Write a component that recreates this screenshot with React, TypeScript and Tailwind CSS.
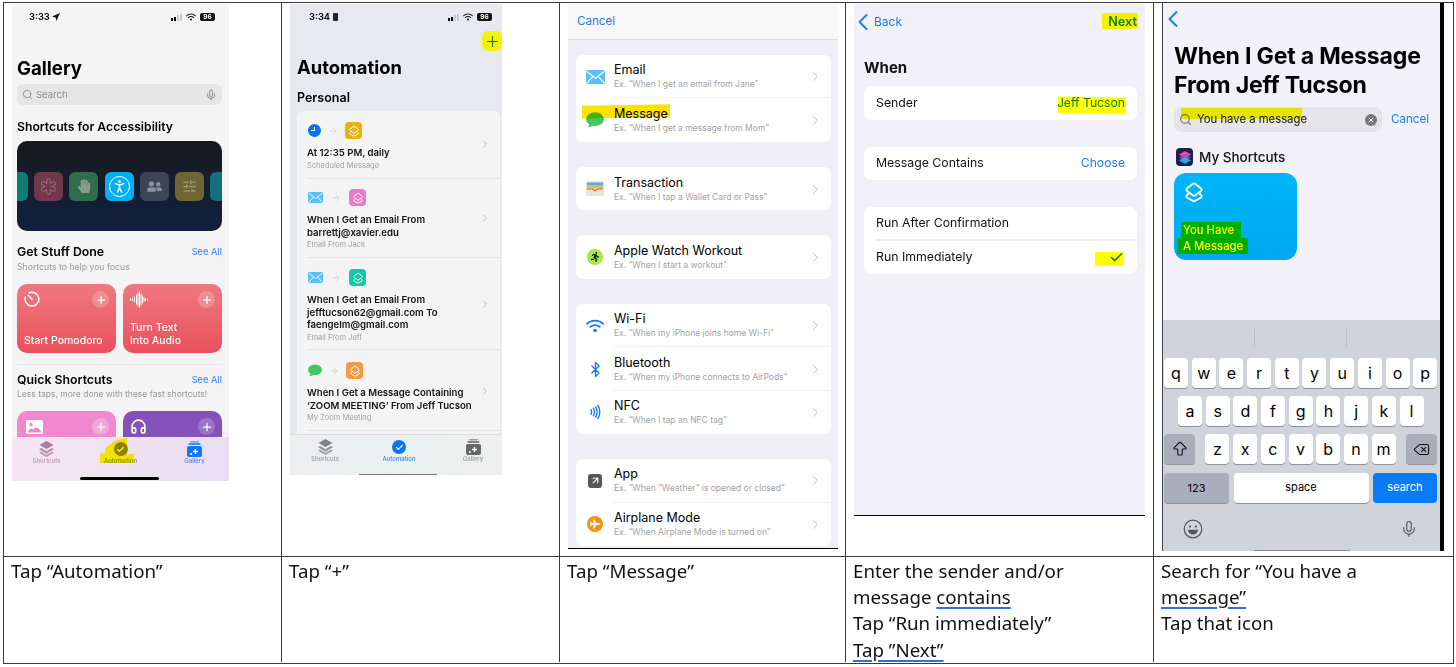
import {
  ArrowRight,
  ArrowUpRight,
  Bluetooth,
  Check,
  ChevronLeft,
  ChevronRight,
  Delete,
  Headphones,
  Mic,
  Nfc,
  Plus,
  PersonStanding,
  Search,
  SlidersHorizontal,
  ArrowBigUp,
  X,
} from "lucide-react";
import { FaHandPaper, FaRunning, FaUserFriends, FaPlane } from "react-icons/fa";
import { FaWifi } from "react-icons/fa6";
import type { ReactNode } from "react";

const Logo = ({ size = 12, color = "white", w = 2 }: { size?: number; color?: string; w?: number }) => (
  <svg width={size} height={size} viewBox="0 0 24 24" fill="none" stroke={color} strokeWidth={w} strokeLinejoin="round" strokeLinecap="round">
    <path d="M10.5 3.2a2.5 2.5 0 0 1 3 0l6 4.6a2 2 0 0 1 0 3.2l-6 4.6a2.5 2.5 0 0 1-3 0l-6-4.6a2 2 0 0 1 0-3.2z" />
    <path d="M6.5 13.5l-2 1.6a2 2 0 0 0 0 3.2l6 3.2a2.5 2.5 0 0 0 3 0l6-3.2a2 2 0 0 0 0-3.2l-2-1.6" />
  </svg>
);

const MailIcon = ({ w, h }: { w: number; h: number }) => (
  <svg width={w} height={h} viewBox="0 0 30 22">
    <rect width="30" height="22" rx="2" fill="#5ac0f7" />
    <path d="M1 2l14 11L29 2M1 21l10-11M29 21L19 10" stroke="white" strokeWidth="1.8" fill="none" />
  </svg>
);

const Bubble = ({ w, h }: { w: number; h: number }) => (
  <svg width={w} height={h} viewBox="0 0 30 26">
    <ellipse cx="15" cy="11.5" rx="15" ry="11.5" fill="#46c65e" />
    <path d="M6 18c0 3-1 5-3 7 4 0 7-1 9-4z" fill="#46c65e" />
  </svg>
);

const WalletIcon = () => (
  <svg width="18" height="15" viewBox="0 0 18 15">
    <rect width="18" height="15" rx="2" fill="#e8e4da" />
    <rect x="1" y="1.5" width="16" height="2.5" fill="#6ba4dc" />
    <rect x="1" y="4" width="16" height="2" fill="#a7cf6c" />
    <rect x="1" y="6" width="16" height="2" fill="#f2c354" />
    <path d="M1 8h5.5l2.5 2 2.500-2H17" stroke="#e2655c" strokeWidth="1.200" fill="none" />
  </svg>
);

const StatusBar = ({ time, extra, pl, pr }: { time: string; extra: ReactNode; pl: string; pr: string }) => (
  <div className={`h-[26px] flex items-center justify-between shrink-0 ${pl} ${pr}`}>
    <div className="flex items-center gap-[2px] text-[9.3px] font-semibold text-black">
      <span>{time}</span>
      {extra}
    </div>
    <div className="flex items-center gap-[4px]">
      <div className="flex items-end gap-[1px] h-[7px]">
        <span className="w-[2px] h-[2.500px] bg-black" />
        <span className="w-[2px] h-[4px] bg-black" />
        <span className="w-[2px] h-[5.500px] bg-[#c9c9c9]" />
        <span className="w-[2px] h-[7px] bg-[#c9c9c9]" />
      </div>
      <FaWifi size={10} color="#111" />
      <span className="w-[15px] h-[8px] rounded-[2px] bg-[#111] text-white text-[6.500px] font-bold leading-[8px] text-center">96</span>
    </div>
  </div>
);

const BannerTile = ({ bg, extra = "", children }: { bg: string; extra?: string; children?: ReactNode }) => (
  <div className={`h-[29px] w-[29px] shrink-0 rounded-[6px] flex items-center justify-center overflow-hidden ${bg} ${extra}`}>{children}</div>
);

const StarOutline = () => (
  <svg width="17" height="17" viewBox="0 0 17 17" strokeLinecap="round">
    <path d="M8.5 2.500v12M3.300 5.500l10.400 6M13.700 5.500l-10.400 6" stroke="#a5707c" strokeWidth="4.500" />
    <path d="M8.5 2.500v12M3.300 5.500l10.400 6M13.700 5.500l-10.400 6" stroke="#70384a" strokeWidth="2.700" />
  </svg>
);

const TimerIcon = () => (
  <svg width="16" height="16" viewBox="0 0 16 16" fill="none" stroke="white" strokeWidth="1.500" strokeLinecap="round">
    <path d="M5 1.900A6.900 6.900 0 1 1 1.400 6" />
    <path d="M4.200 4.200L8 8.200" />
  </svg>
);

const WaveIcon = () => (
  <svg width="18" height="17" viewBox="0 0 18 17" stroke="white" strokeWidth="1" strokeLinecap="round">
    <path d="M.5 7.500v2M2.500 7v3M4.500 6v5M6.500 4v9M8 2v13M9.500 0.500v16M11 3v11M12.500 5v7M14 6.500v4M15.500 7.500v2M17.300 8v1" />
  </svg>
);

const PictureIcon = () => (
  <svg width="17" height="14" viewBox="0 0 17 14">
    <rect width="17" height="14" rx="2" fill="white" />
    <circle cx="5" cy="4.500" r="1.700" fill="#ef88cd" />
    <path d="M1.500 12.500c2-4 4-5 6-3 2-3 5-3 8 3z" fill="#ef88cd" />
  </svg>
);

const SmileIcon = () => (
  <svg width="20" height="20" viewBox="0 0 20 20" fill="none" stroke="#55565a" strokeWidth="1.200">
    <circle cx="10" cy="10" r="8.800" />
    <circle cx="7" cy="7.500" r="1.100" fill="#55565a" stroke="none" />
    <circle cx="13" cy="7.500" r="1.100" fill="#55565a" stroke="none" />
    <path d="M4.800 10.800h10.400c-.4 3-2.600 4.800-5.200 4.800s-4.800-1.800-5.200-4.800z" fill="#55565a" stroke="none" />
  </svg>
);

const PlusDot = ({ bg }: { bg: string }) => (
  <div className={`w-[17px] h-[17px] rounded-full flex items-center justify-center ${bg}`}>
    <Plus size={12} color="white" strokeWidth={2.500} />
  </div>
);

const RedCard = ({ icon, lines }: { icon: ReactNode; lines: string[] }) => (
  <div className="w-[99px] h-[69px] rounded-[10px] bg-gradient-to-b from-[#ef7880] to-[#e8505c] flex flex-col justify-between pl-[7px] pr-[7px] pt-[7px] pb-[6px]">
    <div className="flex items-start justify-between">
      {icon}
      <PlusDot bg="bg-white/20" />
    </div>
    <div className="text-white text-[10.500px] leading-[12.500px] font-medium">
      {lines.map((l) => (
        <div key={l}>{l}</div>
      ))}
    </div>
  </div>
);

const TabIcon = ({ kind, color }: { kind: string; color: string }) => {
  if (kind === "stack")
    return (
      <svg width="15" height="16" viewBox="0 0 15 16">
        <path d="M7.500 0l7 4-7 4-7-4z" fill={color} />
        <path d="M2 7l5.500 3.200L13 7l2 1.200-7.500 4.300L0 8.200z" fill={color} opacity=".85" />
        <path d="M2 10.500l5.500 3.200L13 10.500l2 1.200L7.500 16 0 11.700z" fill={color} opacity=".7" />
      </svg>
    );
  if (kind === "check")
    return (
      <div className="w-[14px] h-[14px] rounded-full flex items-center justify-center" style={{ background: color }}>
        <Check size={9} color="white" strokeWidth={3} />
      </div>
    );
  return (
    <svg width="15" height="16" viewBox="0 0 15 16">
      <rect x="3" y="0" width="9" height="1.500" rx=".7" fill={color} opacity=".6" />
      <rect x="1.500" y="2" width="12" height="2" rx=".7" fill={color} opacity=".8" />
      <rect x="0" y="5" width="15" height="11" rx="2" fill={color} />
      <path d="M8.500 8v5M6 10.500h5" stroke="white" strokeWidth="1.300" />
      <circle cx="4" cy="13" r="1" fill="white" />
    </svg>
  );
};

const TabBar = ({
  bg,
  h,
  offset,
  tabs,
  bar,
}: {
  bg: string;
  h: string;
  offset: string;
  tabs: { label: string; kind: string; color: string; text: string }[];
  bar: ReactNode;
}) => (
  <div className={`shrink-0 flex flex-col items-center relative overflow-hidden ${h} ${bg}`}>
    <div className={`flex w-full pt-[4px] ${offset}`}>
      {tabs.map((t) => (
        <div key={t.label} className="w-[74px] shrink-0 flex flex-col items-center">
          <div className="h-[16px] flex items-center">
            <TabIcon kind={t.kind} color={t.color} />
          </div>
          <div className={`text-[6px] leading-[10px] font-medium mt-[-1px] ${t.text}`}>{t.label}</div>
        </div>
      ))}
    </div>
    {bar}
  </div>
);

const Phone1 = () => (
  <div className="relative w-[217px] h-[477px] bg-[#f4f4f5] flex flex-col overflow-hidden">
    <StatusBar time="3:33" pl="pl-[17px]" pr="pr-[14px]" extra={<svg width="8" height="8" viewBox="0 0 10 10"><path d="M10 0L0 4.500l4.500 1L5.500 10z" fill="#111" /></svg>} />
    <div className="pl-[5px] pr-[7px] flex flex-col flex-1 min-h-0">
      <div className="mt-[26px] h-[24px] text-[18.600px] leading-[24px] font-bold text-black">Gallery</div>
      <div className="mt-[4px] h-[21px] rounded-[6px] bg-[#e6e6e7] flex items-center pl-[5px] pr-[5px] text-[#8c8c8e]">
        <Search size={11} />
        <span className="ml-[3px] text-[9.500px] pt-[1px]">Search</span>
        <Mic size={12} className="ml-auto" />
      </div>
      <div className="mt-[14px] h-[16px] text-[12.200px] leading-[16px] font-semibold text-black">Shortcuts for Accessibility</div>
      <div className="mt-[6px] h-[90px] rounded-[10px] bg-gradient-to-b from-[#18191e] to-[#10203f] flex items-center gap-[6.200px] overflow-hidden">
        <BannerTile bg="bg-[#0b7f73]" extra="-ml-[18px]" />
        <BannerTile bg="bg-[#70384a]"><StarOutline /></BannerTile>
        <BannerTile bg="bg-[#2f6d4c]"><FaHandPaper size={14} color="#8a9a90" /></BannerTile>
        <BannerTile bg="bg-[#05aff2]">
          <div className="w-[21px] h-[21px] rounded-full border-[1.500px] border-white flex items-center justify-center">
            <PersonStanding size={17} color="white" strokeWidth={2} />
          </div>
        </BannerTile>
        <BannerTile bg="bg-[#3c4557]"><FaUserFriends size={15} color="#8a91a0" /></BannerTile>
        <BannerTile bg="bg-[#6f6433]"><SlidersHorizontal size={15} color="#a49b6e" /></BannerTile>
        <BannerTile bg="bg-[#116f80]" />
      </div>
      <div className="mt-[13px] h-[16px] flex items-center justify-between">
        <span className="text-[12.300px] font-semibold text-black">Get Stuff Done</span>
        <span className="text-[9.300px] text-[#2c84f4]">See All</span>
      </div>
      <div className="mt-[1px] h-[12px] text-[8.700px] leading-[12px] text-[#98989c]">Shortcuts to help you focus</div>
      <div className="mt-[11px] flex gap-[7px]">
        <RedCard icon={<TimerIcon />} lines={["Start Pomodoro"]} />
        <RedCard icon={<WaveIcon />} lines={["Turn Text", "Into Audio"]} />
      </div>
      <div className="mt-[11px] h-[1px] bg-[#e9e9ea]" />
      <div className="mt-[7px] h-[16px] flex items-center justify-between">
        <span className="text-[12.300px] font-semibold text-black">Quick Shortcuts</span>
        <span className="text-[9.300px] text-[#2c84f4]">See All</span>
      </div>
      <div className="h-[12px] text-[8.500px] leading-[12px] text-[#98989c]">Less taps, more done with these fast shortcuts!</div>
      <div className="mt-[11px] flex gap-[7px] flex-1 min-h-0 overflow-hidden">
        <div className="w-[99px] h-[70px] rounded-[10px] bg-[#ef88cd] flex items-start justify-between pl-[9px] pr-[7px] pt-[7px]">
          <div className="pt-[2px]"><PictureIcon /></div>
          <PlusDot bg="bg-white/25" />
        </div>
        <div className="w-[99px] h-[70px] rounded-[10px] bg-[#8551b9] flex items-start justify-between pl-[7px] pr-[7px] pt-[7px]">
          <Headphones size={17} color="white" strokeWidth={2.400} />
          <PlusDot bg="bg-white/20" />
        </div>
      </div>
    </div>
    <TabBar
      h="h-[44px]"
      offset="-ml-[5px]"
      bg="bg-gradient-to-r from-[#f6e5f2] to-[#e8dff2]"
      tabs={[
        { label: "Shortcuts", kind: "stack", color: "#a6809a", text: "text-[#b596ad]" },
        { label: "Automation", kind: "check", color: "#8d7f8d", text: "text-[#8d8350]" },
        { label: "Gallery", kind: "gallery", color: "#1478f5", text: "text-[#4a84ee]" },
      ]}
      bar={<div className="absolute bottom-[1px] left-[68px] w-[79px] h-[3px] rounded-full bg-black" />}
    />
    <svg className="absolute left-[88px] top-[433px] mix-blend-multiply" width="34" height="26" viewBox="0 0 34 26">
      <path d="M27 0L15 4 5 11v5L0 17v9h34v-9h-7z" fill="#ffff00" />
    </svg>
  </div>
);

const AutoTile = ({ bg }: { bg: string }) => (
  <div className={`w-[17px] h-[17px] rounded-[4px] flex items-center justify-center ${bg}`}>
    <Logo size={12} />
  </div>
);

const AutoRow = ({
  h,
  icon,
  gap,
  tile,
  lines,
  sub,
  chev,
}: {
  h: string;
  icon: ReactNode;
  gap: string;
  tile: string;
  lines: string[];
  sub: string;
  chev: string;
}) => (
  <div className={`${h} ml-[10px] shrink-0 border-b border-[#e4e4e6] flex items-start justify-between pr-[9px]`}>
    <div className="flex flex-col">
      <div className={`flex items-center ${gap}`}>
        {icon}
        <ArrowRight size={10} color="#d0d0d2" />
        <AutoTile bg={tile} />
      </div>
      <div className="mt-[8px] text-[9.600px] leading-[12.500px] font-semibold text-[#111]">
        {lines.map((l) => (
          <div key={l}>{l}</div>
        ))}
      </div>
      <div className="text-[7.500px] leading-[12px] text-[#a0a0a2]">{sub}</div>
    </div>
    <ChevronRight size={12} color="#b8b8ba" className={chev} />
  </div>
);

const Phone2 = () => (
  <div className="relative w-[212px] h-[471px] bg-[#e8e9ee] flex flex-col overflow-hidden">
    <StatusBar
      time="3:34"
      pl="pl-[19px]"
      pr="pr-[10px]"
      extra={<span className="ml-[1px] w-[5px] h-[8px] rounded-[1px] bg-[#222]" />}
    />
    <div className="h-[20px] mt-[1px] flex justify-end">
      <div className="w-[20px] h-[20px] rounded-[6px] bg-[#f2f20a] flex items-center justify-center">
        <Plus size={17} color="#2a7a12" strokeWidth={1.600} />
      </div>
    </div>
    <div className="mt-[4px] ml-[7px] h-[24px] text-[18.400px] leading-[24px] font-bold text-black">Automation</div>
    <div className="mt-[11px] ml-[7px] h-[16px] text-[12.500px] leading-[16px] font-semibold text-black">Personal</div>
    <div className="mt-[5px] ml-[7px] w-[203px] flex-1 min-h-0 rounded-t-[6px] bg-[#f4f4f5] flex flex-col overflow-hidden pt-[11px]">
      <AutoRow
        h="h-[57px]"
        gap="gap-[7px]"
        chev="mt-[16px]"
        icon={
          <div className="w-[13px] h-[13px] rounded-full bg-[#0f72ee] flex items-center justify-center ml-[1px]">
            <span className="w-[4px] h-[4px] border-r border-b border-white -mt-[3px] -ml-[3px]" />
          </div>
        }
        tile="bg-[#e8b40f]"
        lines={["At 12:35 PM, daily"]}
        sub="Scheduled Message"
      />
      <div className="h-[10px] shrink-0" />
      <AutoRow
        h="h-[69px]"
        gap="gap-[8px]"
        chev="mt-[23px]"
        icon={<div className="ml-[1px] flex"><MailIcon w={15} h={11} /></div>}
        tile="bg-[#ee78cb]"
        lines={["When I Get an Email From", "barrettj@xavier.edu"]}
        sub="Email From Jack"
      />
      <div className="h-[11px] shrink-0" />
      <AutoRow
        h="h-[81px]"
        gap="gap-[8px]"
        chev="mt-[29px]"
        icon={<div className="ml-[1px] flex"><MailIcon w={15} h={11} /></div>}
        tile="bg-[#14c8a4]"
        lines={["When I Get an Email From", "jefftucson62@gmail.com To", "faengelm@gmail.com"]}
        sub="Email From Jeff"
      />
      <div className="h-[12px] shrink-0" />
      <AutoRow
        h="h-[69px]"
        gap="gap-[7px]"
        chev="mt-[23px]"
        icon={<div className="ml-[1px] flex"><Bubble w={14} h={13} /></div>}
        tile="bg-[#f09a45]"
        lines={["When I Get a Message Containing", "‘ZOOM MEETING’ From Jeff Tucson"]}
        sub="My Zoom Meeting"
      />
    </div>
    <TabBar
      h="h-[41px]"
      offset="-ml-[4px]"
      bg="bg-gradient-to-r from-[#eeeeef] via-[#e8f1ef] to-[#efefef] border-t border-[#dcdcde]"
      tabs={[
        { label: "Shortcuts", kind: "stack", color: "#7f8583", text: "text-[#9a9a9a]" },
        { label: "Automation", kind: "check", color: "#0f72ee", text: "text-[#3b88ee]" },
        { label: "Gallery", kind: "gallery", color: "#66686a", text: "text-[#9a9a9a]" },
      ]}
      bar={<div className="absolute bottom-0 left-[69px] w-[78px] h-[1px] bg-[#777]" />}
    />
  </div>
);

const TrigRow = ({ icon, title, sub, line }: { icon: ReactNode; title: string; sub: string; line?: boolean }) => (
  <div className="h-[43.300px] flex items-center">
    <div className="w-[38px] shrink-0 flex items-center justify-center">{icon}</div>
    <div className={`flex-1 h-full flex items-center justify-between pr-[8px] pt-[1px] ${line ? "border-b border-[#efeff1]" : ""}`}>
      <div className="flex flex-col">
        <span className="text-[12.500px] leading-[16px] text-black">{title}</span>
        <span className="text-[8.500px] leading-[13px] text-[#a2a2a5]">{sub}</span>
      </div>
      <ChevronRight size={15} color="#bdbdbf" strokeWidth={1.600} />
    </div>
  </div>
);

const TrigCard = ({ children, mt }: { children: ReactNode; mt: string }) => (
  <div className={`ml-[8px] mr-[7px] rounded-[7px] bg-white overflow-hidden shrink-0 ${mt}`}>{children}</div>
);

const Phone3 = () => (
  <div className="w-[270px] h-[545px] bg-[#efeff5] flex flex-col border-b border-black">
    <div className="h-[36px] shrink-0 bg-[#f8f8f8] border-b border-[#dddde0] flex items-center pl-[9px] text-[11.600px] text-[#1a7cf2]">Cancel</div>
    <TrigCard mt="mt-[15px]">
      <TrigRow icon={<MailIcon w={19} h={14} />} title="Email" sub="Ex. “When I get an email from Jane”" line />
      <TrigRow icon={<Bubble w={18} h={16} />} title="Message" sub="Ex. “When I get a message from Mom”" />
    </TrigCard>
    <TrigCard mt="mt-[25.300px]">
      <TrigRow icon={<WalletIcon />} title="Transaction" sub="Ex. “When I tap a Wallet Card or Pass”" />
    </TrigCard>
    <TrigCard mt="mt-[25.300px]">
      <TrigRow
        icon={
          <div className="w-[16px] h-[16px] rounded-full bg-[#a6e84a] flex items-center justify-center">
            <FaRunning size={10} color="#111" />
          </div>
        }
        title="Apple Watch Workout"
        sub="Ex. “When I start a workout”"
      />
    </TrigCard>
    <TrigCard mt="mt-[25.300px]">
      <TrigRow icon={<FaWifi size={18} color="#0f78f2" />} title="Wi-Fi" sub="Ex. “When my iPhone joins home Wi-Fi”" line />
      <TrigRow icon={<Bluetooth size={17} color="#0f78f2" strokeWidth={1.800} />} title="Bluetooth" sub="Ex. “When my iPhone connects to AirPods”" line />
      <TrigRow icon={<Nfc size={16} color="#0f78f2" />} title="NFC" sub="Ex. “When I tap an NFC tag”" />
    </TrigCard>
    <TrigCard mt="mt-[25.300px]">
      <TrigRow
        icon={
          <div className="w-[14px] h-[14px] rounded-[3px] bg-[#58585c] flex items-center justify-center">
            <ArrowUpRight size={11} color="white" strokeWidth={2.500} />
          </div>
        }
        title="App"
        sub="Ex. “When “Weather” is opened or closed”"
        line
      />
      <TrigRow
        icon={
          <div className="w-[16px] h-[16px] rounded-full bg-[#f7930a] flex items-center justify-center">
            <FaPlane size={10} color="white" />
          </div>
        }
        title="Airplane Mode"
        sub="Ex. “When Airplane Mode is turned on”"
      />
    </TrigCard>
  </div>
);

const WhenRow = ({ label, right, rightClass, line }: { label: string; right?: ReactNode; rightClass?: string; line?: boolean }) => (
  <div className="h-[33.500px] pl-[12px] flex">
    <div className={`flex-1 flex items-center justify-between pr-[12px] ${line ? "border-b-2 border-[#f0f0f4]" : ""}`}>
      <span className="text-[12.300px] text-[#111]">{label}</span>
      <span className={`text-[12.200px] ${rightClass ?? ""}`}>{right}</span>
    </div>
  </div>
);

const Phone4 = () => (
  <div className="relative w-[291px] h-[512px] bg-[#f0f0f6] border-b border-black flex flex-col">
    <div className="h-[36px] flex items-center justify-between pr-[8px] text-[#1a7cf2] text-[12px]">
      <div className="flex items-center -ml-[5px]">
        <ChevronLeft size={28} strokeWidth={1.600} />
        <span className="-ml-[3px]">Back</span>
      </div>
      <span className="font-semibold text-[12.700px]">Next</span>
    </div>
    <div className="mt-[16px] ml-[10px] h-[24px] text-[15px] leading-[24px] font-bold text-[#111]">When</div>
    <div className="ml-[10px] mr-[8px] mt-[6px] rounded-[7px] bg-white">
      <WhenRow label="Sender" right="Jeff Tucson" rightClass="text-[#1a7cf2]" />
    </div>
    <div className="ml-[10px] mr-[8px] mt-[27px] rounded-[7px] bg-white">
      <WhenRow label="Message Contains" right="Choose" rightClass="text-[#1a7cf2]" />
    </div>
    <div className="ml-[10px] mr-[8px] mt-[27px] rounded-[7px] bg-white">
      <WhenRow label="Run After Confirmation" line />
      <WhenRow label="Run Immediately" right={<Check size={15} color="#1a7cf2" strokeWidth={2.500} className="mr-[1px]" />} />
    </div>
    <div className="absolute left-[248px] top-[9px] w-[36px] h-[16px] bg-[#ffff00] mix-blend-multiply -rotate-1" />
    <div className="absolute left-[204px] top-[93px] w-[68px] h-[17px] bg-[#ffff00] mix-blend-multiply rotate-1" />
    <div className="absolute left-[241px] top-[248px] w-[29px] h-[14px] bg-[#ffff00] mix-blend-multiply" />
  </div>
);

const Key = ({ k, w = "w-[24px]" }: { k: string; w?: string }) => (
  <div className={`${w} h-[30px] rounded-[4px] bg-white shadow-[0_1px_0_#8e9197] flex items-center justify-center text-[16px] text-black shrink-0`}>{k}</div>
);

const GrayKey = ({ w, children }: { w: string; children: ReactNode }) => (
  <div className={`${w} h-[30px] rounded-[4px] bg-[#a9afba] shadow-[0_1px_0_#8e9197] flex items-center justify-center shrink-0`}>{children}</div>
);

const Keyboard = () => (
  <div className="h-[231px] mt-auto bg-[#d0d3da] shrink-0 flex flex-col relative">
    <div className="h-[38px] flex pt-[9px] pl-[91px] gap-[91px]">
      <span className="w-[1px] h-[18px] bg-[#bcbfc6]" />
      <span className="w-[1px] h-[18px] bg-[#bcbfc6]" />
    </div>
    <div className="flex gap-[3.700px] pl-[1px]">
      {"qwertyuiop".split("").map((k) => (
        <Key key={k} k={k} />
      ))}
    </div>
    <div className="flex gap-[3.700px] pl-[15px] mt-[8px]">
      {"asdfghjkl".split("").map((k) => (
        <Key key={k} k={k} />
      ))}
    </div>
    <div className="flex pl-[1px] pr-[3px] mt-[8px] justify-between">
      <GrayKey w="w-[31px]"><ArrowBigUp size={18} color="#111" strokeWidth={1.500} /></GrayKey>
      <div className="flex gap-[3.700px]">
        {"zxcvbnm".split("").map((k) => (
          <Key key={k} k={k} />
        ))}
      </div>
      <GrayKey w="w-[31px]"><Delete size={17} color="#111" strokeWidth={1.500} /></GrayKey>
    </div>
    <div className="flex pl-[1px] pr-[3px] mt-[9px] justify-between">
      <GrayKey w="w-[65px]"><span className="text-[11px] text-black">123</span></GrayKey>
      <div className="w-[135px] h-[30px] rounded-[4px] bg-white shadow-[0_1px_0_#8e9197] flex items-center justify-center text-[11px] text-black pb-[2px]">space</div>
      <div className="w-[64px] h-[30px] rounded-[4px] bg-[#0a7bf7] flex items-center justify-center text-[11px] text-white pb-[2px]">search</div>
    </div>
    <div className="flex justify-between pl-[20px] pr-[22px] mt-[16px] items-center">
      <SmileIcon />
      <Mic size={18} color="#55565a" strokeWidth={1.500} />
    </div>
    <div className="absolute bottom-0 left-[91px] w-[96px] h-[1px] bg-[#8c8c90]" />
  </div>
);

const Phone5 = () => (
  <div className="relative w-[282px] h-[548px] bg-[#f1f1f7] border-l border-[#444] border-r-[4px] border-r-black flex flex-col">
    <div className="h-[24px] mt-[4px] flex items-center">
      <ChevronLeft size={28} color="#1a7cf2" strokeWidth={1.700} className="-ml-[4px]" />
    </div>
    <div className="ml-[11px] mt-[11px] text-[23.100px] leading-[29px] font-bold text-black tracking-[-0.2px]">
      <div>When I Get a Message</div>
      <div>From Jeff Tucson</div>
    </div>
    <div className="mt-[7px] flex items-center">
      <div className="ml-[11px] w-[208px] h-[25px] rounded-[7px] bg-[#e4e4e9] flex items-center pl-[5px] pr-[5px] text-[#111]">
        <Search size={13} color="#7a7a7e" strokeWidth={2.200} />
        <span className="ml-[5px] text-[11.300px]">You have a message</span>
        <span className="ml-auto w-[12px] h-[12px] rounded-full bg-[#77777b] flex items-center justify-center">
          <X size={8} color="white" strokeWidth={3} />
        </span>
      </div>
      <span className="ml-[9px] text-[11.600px] text-[#1a7cf2]">Cancel</span>
    </div>
    <div className="mt-[15px] ml-[13px] flex items-center gap-[6px]">
      <div className="w-[17px] h-[18px] rounded-[4px] bg-[#1b2050] flex items-center justify-center">
        <svg width="12" height="13" viewBox="0 0 12 13">
          <path d="M6 0l6 3.500-6 3.500L0 3.500z" fill="#f04d8e" />
          <path d="M0 6.500L6 3l6 3.500-6 3.500z" fill="#8a55dd" opacity=".85" />
          <path d="M0 9.500L6 6l6 3.500L6 13z" fill="#35b8e8" opacity=".85" />
        </svg>
      </div>
      <span className="text-[13.500px] font-medium text-[#111]">My Shortcuts</span>
    </div>
    <div className="mt-[6px] ml-[11px] w-[123px] h-[87px] rounded-[12px] bg-gradient-to-b from-[#00b6f7] to-[#00a8f2] flex flex-col pl-[9px] pt-[8px]">
      <Logo size={22} w={2.100} />
      <div className="mt-[19px] text-[11.300px] leading-[16px] font-medium text-white">
        <div>You Have</div>
        <div>A Message</div>
      </div>
    </div>
    <Keyboard />
    <div className="absolute left-[18px] top-[105px] w-[121px] h-[11px] bg-[#ffff00] mix-blend-multiply" />
    <div className="absolute left-[18px] top-[219px] w-[60px] h-[16px] bg-[#ffff00] mix-blend-multiply" />
    <div className="absolute left-[14px] top-[235px] w-[71px] h-[16px] bg-[#ffff00] mix-blend-multiply" />
  </div>
);

const Line = ({ children, u }: { children: ReactNode; u?: boolean }) => (
  <span className={u ? "underline decoration-[#2f6fe0] decoration-[1.5px] underline-offset-[3px]" : ""}>{children}</span>
);

const cellText = "px-[7px] pt-[1px] text-[18.700px] leading-[26.200px] text-[#111] [font-family:'Noto_Sans',sans-serif]";

export default function App() {
  return (
    <div className="ml-[3px] mt-[2px] w-[1451px] h-[662px] border border-[#3a3a3a] bg-white grid grid-cols-[278px_278px_286px_308px_299px] grid-rows-[554px_105px] [font-family:Inter,sans-serif] overflow-hidden">
      <div className="border-r border-b border-[#3a3a3a] pl-[8px] pt-[1px]">
        <Phone1 />
      </div>
      <div className="border-r border-b border-[#3a3a3a] pl-[8px] pt-[1px]">
        <Phone2 />
      </div>
      <div className="relative border-r border-b border-[#3a3a3a] pl-[8px] pt-[1px]">
        <Phone3 />
        <div className="absolute left-[22px] top-[102px] w-[88px] h-[13px] bg-[#ffe100] mix-blend-multiply -rotate-1" />
      </div>
      <div className="border-r border-b border-[#3a3a3a] pl-[8px] pt-[1px]">
        <Phone4 />
      </div>
      <div className="border-b border-[#3a3a3a] pl-[8px]">
        <Phone5 />
      </div>
      <div className={`border-r border-[#3a3a3a] ${cellText}`}>Tap “Automation”</div>
      <div className={`border-r border-[#3a3a3a] ${cellText}`}>Tap “+”</div>
      <div className={`border-r border-[#3a3a3a] ${cellText}`}>Tap “Message”</div>
      <div className={`border-r border-[#3a3a3a] ${cellText}`}>
        <div>Enter the sender and/or</div>
        <div>message <Line u>contains</Line></div>
        <div>Tap “Run immediately”</div>
        <div><Line u>Tap ”Next”</Line></div>
      </div>
      <div className={cellText}>
        <div>Search for “You have a</div>
        <div><Line u>message”</Line></div>
        <div>Tap that icon</div>
      </div>
    </div>
  );
}
